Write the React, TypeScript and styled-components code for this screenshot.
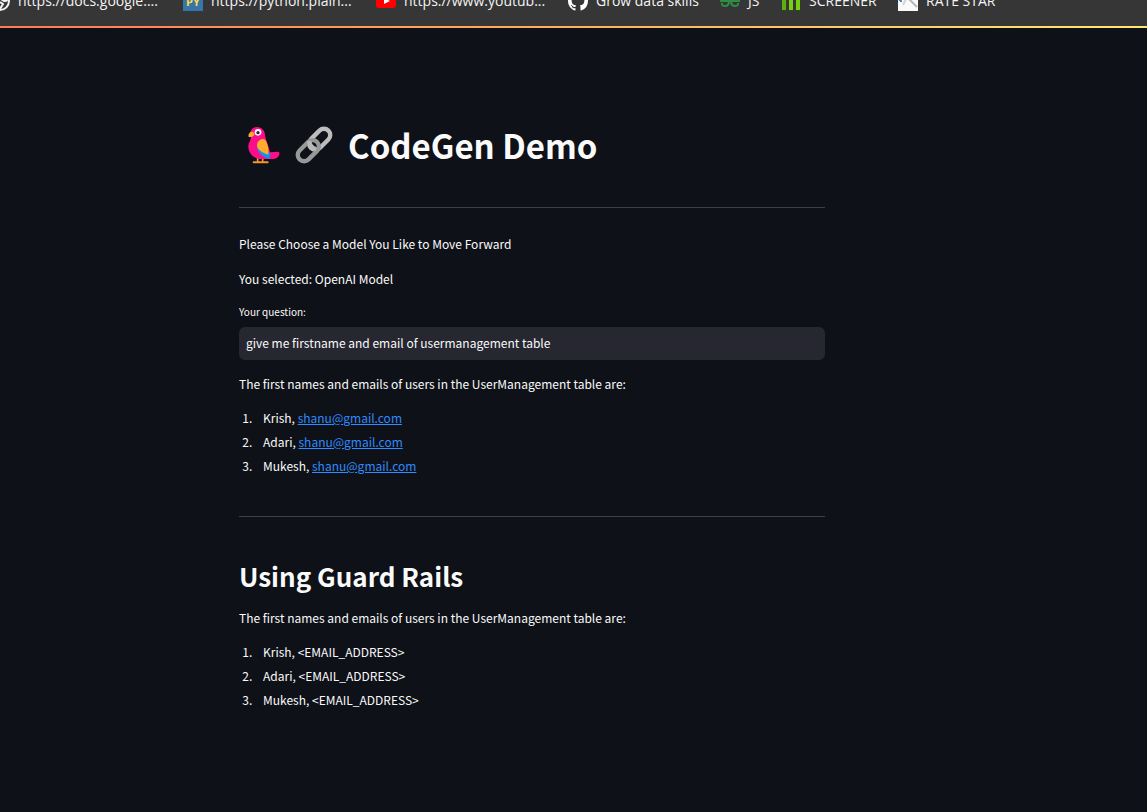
import React from "react";
import styled, { createGlobalStyle } from "styled-components";

const GlobalStyle = createGlobalStyle`
  * { box-sizing: border-box; }
  body {
    margin: 0;
    background: #0e1117;
    color: #fafafa;
    font-family: "Noto Sans CJK JP", "Noto Sans", sans-serif;
    font-size: 12px;
    line-height: 20px;
    overflow-x: hidden;
  }
`;

const BookmarkBar = styled.nav`
  display: flex;
  align-items: center;
  gap: 21px;
  height: 52px;
  margin-top: -24px;
  padding-bottom: 2px;
  overflow: hidden;
  background: linear-gradient(90deg, #ff7a50, #ffb060 50%, #ffe870) bottom / 100% 2px no-repeat #363636;
`;

const Bookmark = styled.a`
  display: flex;
  align-items: center;
  flex: none;
  gap: 8px;
  color: #f4f4f4;
  font-family: "Open Sans", "Noto Sans", sans-serif;
  font-size: 14px;
  text-decoration: none;
  white-space: nowrap;

  &:first-child { margin-left: -10px; }
  svg { display: block; flex: none; }
`;

const BookmarkLabel = styled.span<{ $width: number }>`
  width: ${(p) => p.$width}px;
`;

const Page = styled.main`
  padding: 95px 83px 96px 0;
`;

const Column = styled.div`
  width: 100%;
  max-width: 586px;
  margin: 0 auto;
`;

const Title = styled.h1`
  display: flex;
  align-items: center;
  gap: 15px;
  margin: 0;
  padding-left: 9px;
  font-size: 33px;
  line-height: 44px;
  font-weight: 700;
  white-space: nowrap;
`;

const Subtitle = styled.h2`
  margin: 0 0 14px;
  font-size: 26px;
  line-height: 36px;
  font-weight: 700;
`;

const Divider = styled.hr<{ $after: number }>`
  height: 1px;
  margin: 40px 0 ${(p) => p.$after}px;
  border: 0;
  background: #3e4046;
`;

const Text = styled.p<{ $gap?: number }>`
  margin: 0 0 ${(p) => p.$gap ?? 14}px;
`;

const Field = styled.div`
  display: flex;
  flex-direction: column;
  gap: 6px;
  margin-bottom: 14px;
`;

const FieldLabel = styled.label`
  font-size: 10px;
  line-height: 18px;
`;

const Question = styled.input`
  width: 100%;
  height: 33px;
  padding: 0 7px 3px;
  border: 0;
  border-radius: 6px;
  outline: none;
  background: #262730;
  color: #fafafa;
  font: inherit;
`;

const UserList = styled.ol`
  display: flex;
  flex-direction: column;
  gap: 4px;
  margin: 0;
  padding: 0 0 0 16px;

  li { padding-left: 8px; }
`;

const MailLink = styled.a`
  color: #2f8bff;
  text-decoration: underline;
`;

const Parrot = () => (
  <svg width="32" height="38" viewBox="24 18 96 114" aria-hidden="true">
    <path d="M53 114v13M68 114v13" stroke="#f9962c" strokeWidth="5" />
    <path d="M41 127h42" stroke="#f9962c" strokeWidth="6" strokeLinecap="round" />
    <path d="M50 21C64 21 74 31 75 44C76 58 87 79 90 97L114 95C119 95 119 101 117 106C114 113 109 117 99 117H64C39 117 24 98 25 77C26 67 33 61 33 51L31 35C34 27 41 21 50 21Z" fill="#fb0d8b" />
    <path d="M51 73C49 92 61 110 88 117L92 101Z" fill="#1292e8" />
    <path d="M67 57C58 59 51 67 51 75C51 87 64 98 84 104C89 92 82 71 78 63C76 58 71 56 67 57Z" fill="#ffad2d" />
    <path d="M36 35C28 36 24 43 26 51C33 52 41 49 43 44C43 38 40 35 36 35Z" fill="#ffad2d" />
    <circle cx="54" cy="37" r="10" fill="#fff" />
    <circle cx="54" cy="38" r="5" fill="#35202f" />
  </svg>
);

const Chain = () => (
  <svg width="38" height="38" viewBox="165 17 114 114" fill="none" strokeWidth="13" aria-hidden="true">
    <rect x="202" y="38" width="74" height="38" rx="19" transform="rotate(-45 239 57)" stroke="#bdbdbd" />
    <rect x="168" y="72" width="74" height="38" rx="19" transform="rotate(-45 205 91)" stroke="#989898" />
    <path d="M207 62C209 75 216 83 228 86" stroke="#b8b8b8" />
  </svg>
);

const icons = {
  globe: (
    <svg width="20" height="20" viewBox="0 0 20 20">
      <circle cx="10" cy="10" r="9" fill="#363636" stroke="#f2f2f2" strokeWidth="2" />
      <path d="M10 9h8c0 1-1 2-3 2-3 0-3-2-5-2Z" fill="#f2f2f2" />
      <path d="M10 11l3 2-3 5" fill="none" stroke="#f2f2f2" strokeWidth="2" />
    </svg>
  ),
  py: (
    <svg width="20" height="20" viewBox="0 0 20 20">
      <rect width="20" height="20" fill="#3776ab" />
      <text x="10" y="15" textAnchor="middle" fontSize="11" fontWeight="700" fontFamily="Open Sans, sans-serif" fill="#ffd94c">PY</text>
    </svg>
  ),
  youtube: (
    <svg width="20" height="20" viewBox="0 0 20 20">
      <rect y="3" width="20" height="14" rx="3" fill="#f00" />
      <path d="M8 7l6 3-6 3Z" fill="#fff" />
    </svg>
  ),
  github: (
    <svg width="20" height="20" viewBox="0 0 16 16">
      <path fill="#fff" d="M8 0C3.58 0 0 3.58 0 8c0 3.54 2.29 6.53 5.47 7.59.4.07.55-.17.55-.38 0-.19-.01-.82-.01-1.49-2.01.37-2.53-.49-2.69-.94-.09-.23-.48-.94-.82-1.13-.28-.15-.68-.52-.01-.53.63-.01 1.08.58 1.23.82.72 1.21 1.87.87 2.33.66.07-.52.28-.87.51-1.07-1.78-.2-3.64-.89-3.64-3.95 0-.87.31-1.59.82-2.15-.08-.2-.36-1.02.08-2.12 0 0 .67-.21 2.2.82A7.6 7.6 0 0 1 8 3.86c.68 0 1.36.09 2 .27 1.53-1.04 2.2-.82 2.2-.82.44 1.1.16 1.92.08 2.12.51.56.82 1.27.82 2.15 0 3.07-1.87 3.75-3.65 3.95.29.25.54.73.54 1.48 0 1.07-.01 1.93-.01 2.2 0 .21.15.46.55.38A8.01 8.01 0 0 0 16 8c0-4.42-3.58-8-8-8Z" />
    </svg>
  ),
  geeks: (
    <svg width="20" height="20" viewBox="0 0 20 20" fill="none" stroke="#2f8d46" strokeWidth="2">
      <path d="M8 6C4 3 1 7 1 10H9C9 13 8 15 5 15S2 14 2 12M12 6c4-3 7 1 7 4H11C11 13 12 15 15 15s3-1 3-3" />
    </svg>
  ),
  bars: (
    <svg width="20" height="20" viewBox="0 0 20 20">
      <path d="M1 8h4v11H1Z" fill="#5fae0f" />
      <path d="M8 5h4v14H8ZM15 2h4v17h-4Z" fill="#78cf12" />
      <path d="M1 19h4v1H1ZM8 19h4v1H8ZM15 19h4v1h-4Z" fill="#2c4a12" />
    </svg>
  ),
  star: (
    <svg width="20" height="20" viewBox="0 0 20 20">
      <rect width="20" height="20" fill="#fafafa" />
      <path d="M10 7l9 9" fill="none" stroke="#b4b8bc" strokeWidth="2" />
      <path d="M1 9l3 1-1 1Z" fill="#2a86c8" stroke="#2a86c8" />
      <path d="M8 8L5 14" stroke="#d2d5d8" strokeWidth="2" />
    </svg>
  ),
};

const bookmarks = [
  { icon: icons.globe, label: "https://docs.google....", width: 144 },
  { icon: icons.py, label: "https://python.plain...", width: 144 },
  { icon: icons.youtube, label: "https://www.youtub...", width: 143 },
  { icon: icons.github, label: "Grow data skills", width: 103 },
  { icon: icons.geeks, label: "JS", width: 12 },
  { icon: icons.bars, label: "SCREENER", width: 68 },
  { icon: icons.star, label: "RATE STAR", width: 72 },
];

const names = ["Krish", "Adari", "Mukesh"];

export default function App() {
  return (
    <>
      <GlobalStyle />
      <BookmarkBar aria-label="Bookmarks">
        {bookmarks.map((b) => (
          <Bookmark key={b.label} href="#">
            {b.icon}
            <BookmarkLabel $width={b.width}>{b.label}</BookmarkLabel>
          </Bookmark>
        ))}
      </BookmarkBar>
      <Page>
        <Column>
          <Title>
            <Parrot />
            <Chain />
            <span>CodeGen Demo</span>
          </Title>
          <Divider $after={26} />
          <Text $gap={15}>Please Choose a Model You Like to Move Forward</Text>
          <Text>You selected: OpenAI Model</Text>
          <Field>
            <FieldLabel htmlFor="question">Your question:</FieldLabel>
            <Question id="question" type="text" defaultValue="give me firstname and email of usermanagement table" />
          </Field>
          <Text>The first names and emails of users in the UserManagement table are:</Text>
          <UserList>
            {names.map((name) => (
              <li key={name}>
                {name}, <MailLink href="mailto:shanu@gmail.com">shanu@gmail.com</MailLink>
              </li>
            ))}
          </UserList>
          <Divider $after={41} />
          <Subtitle>Using Guard Rails</Subtitle>
          <Text>The first names and emails of users in the UserManagement table are:</Text>
          <UserList>
            {names.map((name) => (
              <li key={name}>{name}, &lt;EMAIL_ADDRESS&gt;</li>
            ))}
          </UserList>
        </Column>
      </Page>
    </>
  );
}
